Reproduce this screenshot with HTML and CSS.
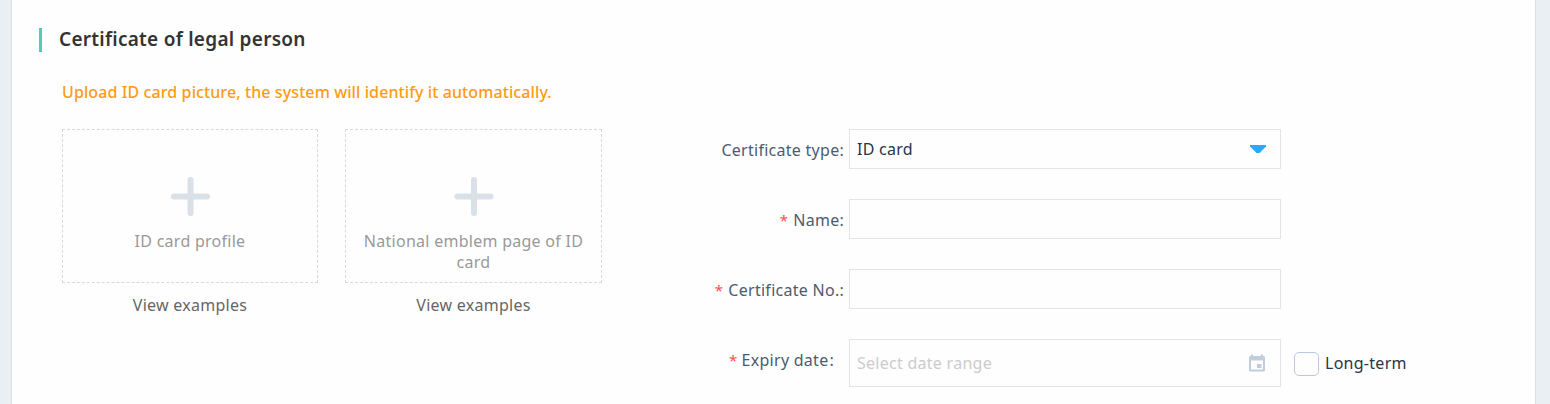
FILE: index.html
```html
<!DOCTYPE html>
<html lang="en">
<head>
<meta charset="utf-8">
<title>Certificate of legal person</title>
<link rel="stylesheet" href="styles.css">
</head>
<body>
<main class="panel">
  <h2 class="title">Certificate of legal person</h2>
  <p class="notice">Upload ID card picture, the system will identify it automatically.</p>
  <div class="content">
    <section class="uploads">
      <div class="upload">
        <div class="dropzone">
          <svg class="plus" width="40" height="40" viewBox="0 0 40 40"><path d="M20.500 3v33M4 19.500h33"/></svg>
          <span class="drop-text">ID card profile</span>
        </div>
        <a class="example">View examples</a>
      </div>
      <div class="upload upload-wide">
        <div class="dropzone">
          <svg class="plus" width="40" height="40" viewBox="0 0 40 40"><path d="M20 3v33M3.500 19.500h33"/></svg>
          <span class="drop-text">National emblem page of ID<br>card</span>
        </div>
        <a class="example">View examples</a>
      </div>
    </section>
    <form class="form">
      <div class="row">
        <label class="label">Certificate type:</label>
        <div class="field"><span class="value">ID card</span>
          <svg class="caret" width="16" height="8" viewBox="0 0 16 8"><path d="M0 0h16v1.500L9.500 8h-3L0 1.500z"/></svg>
        </div>
      </div>
      <div class="row">
        <label class="label"><span class="star">*</span>Name:</label>
        <div class="field"></div>
      </div>
      <div class="row">
        <label class="label"><span class="star">*</span>Certificate No.:</label>
        <div class="field"></div>
      </div>
      <div class="row">
        <label class="label label-date"><span class="star">*</span>Expiry date<span class="colon">:</span></label>
        <div class="field field-date"><span class="placeholder">Select date range</span>
          <svg class="calendar" width="16" height="18" viewBox="0 0 16 18"><path fill-rule="evenodd" d="M2 .5h2.200V2h7.600V.5H14V2h.5Q16 2 16 3.500v12.500q0 1.500-1.500 1.500h-13Q0 17.500 0 16V3.500Q0 2 1.500 2H2zM2 6.500v9h12v-9zM8 10h4.500v4H8z"/></svg>
        </div>
        <span class="checkbox"></span>
        <span class="long-term">Long-term</span>
      </div>
    </form>
  </div>
</main>
</body>
</html>
```
FILE: styles.css
```css
* { box-sizing: border-box; }
body {
  margin: 0;
  height: 404px;
  padding: 0 14px 0 11px;
  overflow: hidden;
  background: #eaeff3;
  font-family: "Noto Sans", "Open Sans", sans-serif;
  font-size: 16px;
  letter-spacing: 0.27px;
  line-height: 21px;
  white-space: nowrap;
}
.panel {
  height: 404px;
  padding: 28px 0 0 27px;
  border: solid #dbe0e7;
  border-width: 0 1px;
  background: #fefefe;
}
.title {
  height: 24px;
  margin: 0;
  padding-left: 17px;
  border-left: 3px solid #52cdb5;
  color: #333;
  font-size: 19px;
  font-weight: 600;
  line-height: 23px;
}
.notice {
  margin: 30px 0 26px 23px;
  color: #ff9b12;
  font-weight: 500;
  letter-spacing: 0.1px;
}
.content { display: flex; padding-left: 23px; }
.uploads { display: flex; gap: 27px; width: 640px; }
.upload { width: 256px; text-align: center; }
.upload-wide { width: 257px; }
.dropzone {
  display: flex;
  flex-direction: column;
  align-items: center;
  height: 154px;
  margin-bottom: 12px;
  padding-top: 47px;
  border: 1px dashed #d9d9d9;
}
.plus { flex: none; margin-bottom: 14px; fill: none; stroke: #d9e0e7; stroke-width: 6; stroke-linecap: round; }
.drop-text { color: #999; }
.example { color: #666; }
.form { display: flex; flex-direction: column; gap: 30px; }
.row { display: flex; height: 40px; }
.label { width: 142px; margin-right: 5px; padding-top: 11px; color: #4c5c70; text-align: right; }
.label-date { padding-right: 10px; }
.star { margin-right: 5px; color: #ff4d4f; font-size: 15px; }
.label-date .star { margin-right: 4px; }
.colon { margin-left: 1px; }
.field {
  display: flex;
  align-items: center;
  justify-content: space-between;
  width: 432px;
  height: 40px;
  padding: 0 14px 0 7px;
  border: 1px solid #e4e4e4;
}
.field-date { height: 48px; }
.value, .long-term { color: #26354a; }
.placeholder { color: #ccc; }
.caret { fill: #2ea7f9; }
.calendar { margin-right: 1px; fill: #c0cddd; }
.checkbox { width: 25px; height: 24px; margin: 13px 6px 0 13px; border: 1px solid #b8c8dc; border-radius: 5px; }
.long-term { padding-top: 14px; }
```
